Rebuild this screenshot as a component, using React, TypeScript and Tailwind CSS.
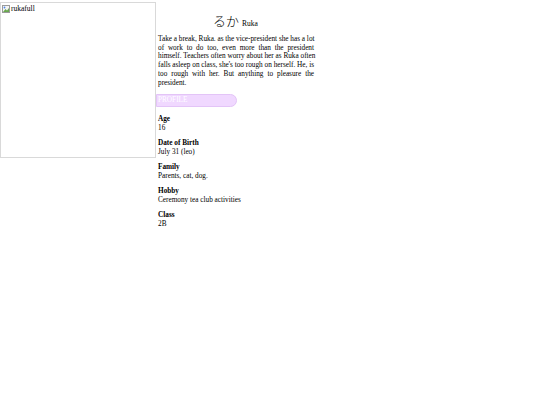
import React from 'react';

const facts: { label: string; value: string }[] = [
    { label: 'Age', value: '16' },
    { label: 'Date of Birth', value: 'July 31 (leo)' },
    { label: 'Family', value: 'Parents, cat, dog.' },
    { label: 'Hobby', value: 'Ceremony tea club activities' },
    { label: 'Class', value: '2B' },
];

// line breaks as the bio wraps in the column
const bio: string[] = [
    'Take a break, Ruka. as the vice-president she has a lot',
    'of work to do too, even more than the president',
    'himself. Teachers often worry about her as Ruka often',
    "falls asleep on class, she's too rough on herself. He, is",
    'too rough with her. But anything to pleasure the',
    'president.',
];

const BrokenImage = () => (
    <svg width="8" height="8" viewBox="0 0 8 8" className="inline-block align-[-1px]">
        <rect x="0.5" y="0.5" width="7" height="7" fill="#f4f4f4" stroke="#9a9a9a" />
        <path d="M1 7 L3.5 4 L5 5.5 L7 3 V7 Z" fill="#6aa84f" />
        <circle cx="2.5" cy="2.5" r="0.9" fill="#4a86e8" />
    </svg>
);

export default function App() {
    return (
        <div className="w-[540px] h-[405px] bg-white font-['Liberation_Serif','Noto_Sans_CJK_JP',serif] text-black antialiased">
            <div className="flex items-start">

                <div className="mt-[2px] w-[156px] h-[156px] border border-[#d9d9d9] shrink-0">
                    <div className="text-[7.5px] leading-[9px] pl-[1px] pt-[1px] flex items-center gap-[1px]">
                        <BrokenImage />
                        <span>rukafull</span>
                    </div>
                </div>

                <div className="w-[159px] flex flex-col">
                    <div className="h-[35px] flex items-end justify-center gap-[3px] pb-[8px]">
                        <span className="text-[13px] leading-none font-['Noto_Sans_CJK_JP',serif] font-light">るか</span>
                        <span className="text-[7.5px] leading-none">Ruka</span>
                    </div>

                    <p className="pl-[2px] pr-[1px] text-[7.25px] leading-[8.7px]">
                        {bio.map((line, i) => (
                            <span
                                key={i}
                                className={i < bio.length - 1 ? 'block whitespace-nowrap text-justify [text-align-last:justify]' : 'block'}
                            >
                                {line}
                            </span>
                        ))}
                    </p>

                    <div className="mt-[6.5px] w-[81px] h-[13px] bg-[#f0d8ff] border border-[#e3c4f7] rounded-r-full text-white text-[7.25px] leading-[11px] pl-[1px]">
                        PROFILE
                    </div>

                    <div className="pl-[2px] mt-[8.7px] flex flex-col gap-[6.6px] text-[7.25px] leading-[8.7px]">
                        {facts.map((f) => (
                            <div key={f.label}>
                                <div className="font-bold">{f.label}</div>
                                <div>{f.value}</div>
                            </div>
                        ))}
                    </div>
                </div>

            </div>
        </div>
    );
}
